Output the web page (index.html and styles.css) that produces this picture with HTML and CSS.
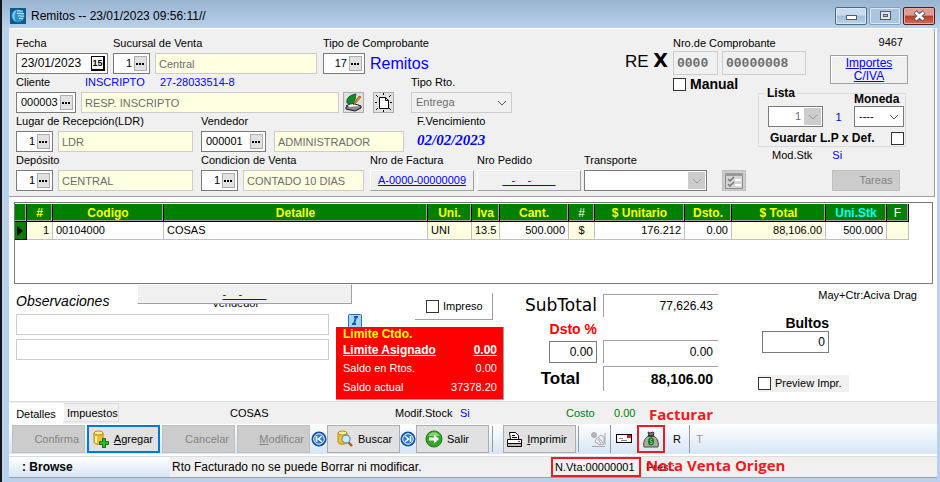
FILE: index.html
```html
<!DOCTYPE html>
<html lang="es">
<head>
<meta charset="utf-8">
<title>Remitos</title>
<link rel="stylesheet" href="styles.css">
</head>
<body>
<div class="window">
  <header class="titlebar">
    <svg class="app-icon" width="16" height="16" viewBox="0 0 16 16" aria-hidden="true"><rect width="16" height="16" fill="#0d5b8c"/><circle cx="8" cy="8" r="6.5" fill="#2f8fca"/><path d="M4 3c-3 4-2 8 2 11C4 10 4 6 7 2z" fill="#7cc6ee"/><path d="M7 3c3-1 3 1 6 0M7 5.500c3-1 3 1 7 0M8 8c2-1 3 1 6 0M9 10.500c2-1 2 1 4 0" stroke="#e4f4fd" fill="none"/></svg>
    <h1>Remitos -- 23/01/2023 09:56:11//</h1>
    <button class="win-btn" aria-label="Minimizar"><svg width="28" height="16" viewBox="0 0 28 16"><rect x="9.500" y="7.500" width="10" height="4" fill="#fff" stroke="#545b66"/></svg></button>
    <button class="win-btn dim" aria-label="Restaurar"><svg width="28" height="16" viewBox="0 0 28 16"><rect x="9.500" y="3.500" width="10" height="8" fill="#dde6ef" stroke="#545b66"/><rect x="12.500" y="6.500" width="4" height="2" fill="#a9c1da" stroke="#545b66"/></svg></button>
    <button class="win-btn close" aria-label="Cerrar"><svg width="28" height="16" viewBox="0 0 28 16"><path d="M10 4l9 8M19 4l-9 8" stroke="#545b66" stroke-width="4.500"/><path d="M10.500 4.500l8 7M18.500 4.500l-8 7" stroke="#fff" stroke-width="2.500"/></svg></button>
  </header>

  <main>
    <section class="head">
      <div class="head-top">
        <div class="rows">
          <div class="row">
            <div class="group w-fecha">
              <label for="fecha">Fecha</label>
              <div class="lookup date"><input id="fecha" value="23/01/2023"><button class="cal" aria-label="Calendario">15</button></div>
            </div>
            <div class="group w-suc">
              <label for="suc">Sucursal de Venta</label>
              <div class="pair"><div class="lookup short"><input id="suc" value="1"><button aria-label="Buscar sucursal"><i></i></button></div><input class="ro grow" aria-label="Sucursal" value="Central" readonly></div>
            </div>
            <div class="group">
              <label for="tipo">Tipo de Comprobante</label>
              <div class="pair"><div class="lookup mid"><input id="tipo" value="17"><button aria-label="Buscar tipo"><i></i></button></div><span class="kind">Remitos</span></div>
            </div>
          </div>
          <div class="row">
            <div class="group w-cli">
              <div class="labels"><label for="cli">Cliente</label><span class="blue">INSCRIPTO</span><span class="blue">27-28033514-8</span></div>
              <div class="pair"><div class="lookup code"><input id="cli" value="000003"><button aria-label="Buscar cliente"><i></i></button></div><input class="ro grow" aria-label="Nombre del cliente" value="RESP. INSCRIPTO" readonly></div>
            </div>
            <div class="group w-icons end">
              <div class="icons">
                <button class="sq" aria-label="Ver cliente"><svg width="19" height="19" viewBox="0 0 19 19"><path d="M2 13l6-3 9 3-6 4z" fill="#fff" stroke="#111"/><path d="M2 14v2l9 2 6-3v-2" fill="#8a8a8a" stroke="#111"/><path d="M3 10C2 5 6 2 12 1c-1 3 0 7-4 10z" fill="#138a2a" stroke="#063"/><path d="M17 4l-6 7-2 1 1-2 5-7z" fill="#e98b22" stroke="#7a3b00" stroke-width=".6"/></svg></button>
                <button class="sq" aria-label="Nuevo cliente"><svg width="19" height="19" viewBox="0 0 19 19" fill="none" stroke="#000"><path d="M5.500 4.500h6l3 3v8h-9z" fill="#fff"/><path d="M11.500 4.500v3h3M1 9.500h2M16 9.500h2M2 2l2 2M17 2l-2 2M2 17l2-2M17 17l-2-2M9.500 0v2M9.500 17v2"/></svg></button>
              </div>
            </div>
            <div class="group">
              <label for="rto">Tipo Rto.</label>
              <select id="rto" class="flat w-rto" disabled><option>Entrega</option></select>
            </div>
          </div>
          <div class="row">
            <div class="group w-lugar">
              <label for="ldr">Lugar de Recepción(LDR)</label>
              <div class="pair"><div class="lookup short"><input id="ldr" value="1"><button aria-label="Buscar lugar"><i></i></button></div><input class="ro w-name" aria-label="Lugar" value="LDR" readonly></div>
            </div>
            <div class="group w-vend">
              <label for="vend">Vendedor</label>
              <div class="pair wide"><div class="lookup vend"><input id="vend" value="000001"><button aria-label="Buscar vendedor"><i></i></button></div><input class="ro w-adm" aria-label="Nombre del vendedor" value="ADMINISTRADOR" readonly></div>
            </div>
            <div class="group">
              <span class="cap">F.Vencimiento</span>
              <span class="due">02/02/2023</span>
            </div>
          </div>
        </div>

        <div class="right">
          <div class="right-top">
            <span class="letter">RE <b>X</b></span>
            <div class="nro">
              <label for="n1">Nro.de Comprobante</label>
              <div class="nro-row"><input id="n1" class="gray n4" value="0000" disabled><input class="gray n8" aria-label="Número" value="00000008" disabled></div>
              <label class="check big"><input type="checkbox">Manual</label>
            </div>
            <div class="amounts">
              <span>9467</span>
              <button class="sunken">Importes<br>C/IVA</button>
            </div>
          </div>
          <fieldset class="lista">
            <legend>Lista</legend>
            <div class="lista-row">
              <select class="edge off w-lista" aria-label="Lista" disabled><option>1</option></select>
              <span class="one">1</span>
              <div class="moneda"><label for="mon">Moneda</label><select id="mon" class="edge"><option>----</option></select></div>
            </div>
            <label class="check guardar">Guardar L.P x Def.<input type="checkbox"></label>
          </fieldset>
        </div>
      </div>

      <div class="row">
        <div class="group w-lugar">
          <label for="dep">Depósito</label>
          <div class="pair"><div class="lookup short"><input id="dep" value="1"><button aria-label="Buscar depósito"><i></i></button></div><input class="ro w-name" aria-label="Depósito nombre" value="CENTRAL" readonly></div>
        </div>
        <div class="group w-cond">
          <label for="cond">Condicion de Venta</label>
          <div class="pair"><div class="lookup short"><input id="cond" value="1"><button aria-label="Buscar condición"><i></i></button></div><input class="ro w-cdias" aria-label="Condición" value="CONTADO 10 DIAS" readonly></div>
        </div>
        <div class="group w-fac"><span class="cap">Nro de Factura</span><button class="raised">A-0000-00000009</button></div>
        <div class="group w-fac"><span class="cap">Nro Pedido</span><button class="raised">   -    -        </button></div>
        <div class="group w-trans"><label for="tr">Transporte</label><select id="tr" class="edge off"><option></option></select></div>
        <div class="group end">
          <button class="sq gray-sq" aria-label="Lista de tareas"><svg width="22" height="19" viewBox="0 0 22 19"><rect x="2.500" y="2.500" width="17" height="15" fill="#d4d4d4" stroke="#8e8e8e"/><rect x="2" y="2" width="18" height="3" fill="#9a9a9a"/><path d="M5 8l2 2 4-4M5 13l2 2 4-4" stroke="#777" stroke-width="1.500" fill="none"/><path d="M12 9h6M12 14h6" stroke="#fff" stroke-width="2"/></svg></button>
        </div>
        <div class="tasks">
          <div class="mod"><span>Mod.Stk</span><span class="blue">Si</span></div>
          <button class="btn-tareas" disabled>Tareas</button>
        </div>
      </div>
    </section>

    <section class="grid-wrap">
      <table>
        <colgroup><col class="c-ind"><col class="c-num"><col class="c-cod"><col class="c-det"><col class="c-uni"><col class="c-iva"><col class="c-cant"><col class="c-num"><col class="c-unit"><col class="c-dsto"><col class="c-total"><col class="c-stk"><col class="c-f"></colgroup>
        <thead><tr><th></th><th>#</th><th>Codigo</th><th>Detalle</th><th>Uni.</th><th>Iva</th><th>Cant.</th><th class="white">#</th><th>$ Unitario</th><th>Dsto.</th><th>$ Total</th><th class="cyan">Uni.Stk</th><th class="white">F</th></tr></thead>
        <tbody><tr><td class="mark"><svg width="6" height="10" viewBox="0 0 6 10"><path d="M0 0l6 5-6 5z"/></svg></td><td class="y r">1</td><td>00104000</td><td>COSAS</td><td class="y">UNI</td><td class="y r">13.5</td><td class="r">500.000</td><td class="y c">$</td><td class="r">176.212</td><td class="r">0.00</td><td class="y r">88,106.00</td><td class="r">500.000</td><td class="y"></td></tr></tbody>
      </table>
    </section>

    <section class="detail">
      <div class="obs">
        <div class="obs-head"><label for="obs1">Observaciones</label><span>Vendedor</span><button class="raised over">-    -        </button></div>
        <input id="obs1"><input aria-label="Observaciones, segunda línea">
      </div>
      <div class="limits">
        <label class="check impreso"><input type="checkbox">Impreso</label>
        <svg class="info" width="14" height="13" viewBox="0 0 14 13"><rect x=".5" y=".5" width="13" height="13" rx="1" fill="#a9d3f7" stroke="#1e6fc0"/><path d="M6 3h4M4 10h4M8 3L6 10" stroke="#1458b0" stroke-width="1.800" fill="none"/></svg>
        <dl class="credit">
          <dt class="yellow">Limite Ctdo.</dt><dd></dd>
          <dt class="strong">Limite Asignado</dt><dd class="strong">0.00</dd>
          <dt>Saldo en Rtos.</dt><dd>0.00</dd>
          <dt>Saldo actual</dt><dd>37378.20</dd>
        </dl>
      </div>
      <div class="totals">
        <span class="t-sub">SubTotal</span><output class="val">77,626.43</output>
        <div class="disc"><label for="dsto">Dsto %</label><input id="dsto" class="num" value="0.00"></div><output class="val low">0.00</output>
        <span class="t-tot">Total</span><output class="val bold">88,106.00</output>
      </div>
      <div class="extra">
        <span class="hint">May+Ctr:Aciva Drag</span>
        <div class="bultos"><label for="bul">Bultos</label><input id="bul" class="num" value="0"></div>
        <label class="check preview"><input type="checkbox">Preview Impr.</label>
      </div>
    </section>

    <nav class="tabs">
      <button class="tab on">Detalles</button><button class="tab">Impuestos</button>
      <span class="s-item">COSAS</span><span class="s-mod">Modif.Stock</span><span class="s-si blue">Si</span><span class="s-costo">Costo</span><span class="s-zero">0.00</span><strong class="note">Facturar</strong>
    </nav>

    <div class="toolbar">
      <button class="tb" disabled>Confirma</button>
      <button class="tb focus"><svg width="18" height="18" viewBox="0 0 18 18"><path d="M2 3v9c0 3 9 3 9 0V3z" fill="#f2c12e" stroke="#b98712"/><ellipse cx="6.500" cy="3" rx="4.500" ry="2" fill="#fff0a0" stroke="#b98712"/><path d="M4 6v7" stroke="#fff3b4" stroke-width="2"/><path d="M10.500 8.500h3v3h3v3h-3v3h-3v-3h-3v-3h3z" fill="#35b52c" stroke="#11730c"/></svg><span><u>A</u>gregar</span></button>
      <button class="tb" disabled>Cancelar</button>
      <button class="tb" disabled><span><u>M</u>odificar</span></button>
      <button class="round" aria-label="Primero"><svg width="16" height="16" viewBox="0 0 16 16"><circle cx="8" cy="8" r="7.500" fill="#0e50a8"/><circle cx="8" cy="8" r="5.300" fill="#2b7ad6" stroke="#fff"/><path d="M5.500 5v6M11 5L7.500 8l3.500 3" stroke="#fff" stroke-width="1.600" fill="none"/></svg></button>
      <button class="tb live"><svg width="18" height="18" viewBox="0 0 18 18"><path d="M2 3v9c0 3 9 3 9 0V3z" fill="#f2c12e" stroke="#b98712"/><ellipse cx="6.500" cy="3" rx="4.500" ry="2" fill="#fff0a0" stroke="#b98712"/><path d="M12 12l4 4" stroke="#a4581c" stroke-width="2.400"/><circle cx="10" cy="9" r="4" fill="#cfe9fa" stroke="#6f93ad" stroke-width="1.300"/></svg>Buscar</button>
      <button class="round" aria-label="Último"><svg width="16" height="16" viewBox="0 0 16 16"><circle cx="8" cy="8" r="7.500" fill="#0e50a8"/><circle cx="8" cy="8" r="5.300" fill="#2b7ad6" stroke="#fff"/><path d="M10.500 5v6M5 5l3.500 3L5 11" stroke="#fff" stroke-width="1.600" fill="none"/></svg></button>
      <button class="tb live"><svg width="18" height="18" viewBox="0 0 18 18"><circle cx="9" cy="9" r="8" fill="#35a52b" stroke="#1c7a17"/><path d="M3 6c3-5 9-5 12 0" fill="#86d36f"/><path d="M4 7.500h5V4.500L14 9l-5 4.500v-3H4z" fill="#fff"/></svg>Salir</button>
      <span class="sep"></span>
      <button class="tb print"><svg width="17" height="17" viewBox="0 0 17 17" fill="#fff" stroke="#000"><path d="M4.500 8.500l-1-7h6l3 3v4z"/><path d="M6 4.500h3M6 6.500h5"/><path d="M1.500 8.500h14v4h-14z"/><path d="M1.500 12.500h14v3h-14z" fill="#bbb"/><path d="M12 10.500h2" stroke="#d22"/></svg><span><u>I</u>mprimir</span></button>
      <span class="sep"></span>
      <div class="tools">
        <button class="tool line" aria-label="Editar"><svg width="17" height="17" viewBox="0 0 17 17" fill="none" stroke="#a9a9a9"><circle cx="4" cy="4" r="2.500" fill="#b5b5b5"/><path d="M2 15.500h13M6 8l5-4 3 2v7l-4 1-5-3zM8 6l5 6M15 2v12M8 8l3 5"/></svg></button>
        <button class="tool mail" aria-label="Enviar"><svg width="17" height="10" viewBox="0 0 17 10"><rect x=".5" y=".5" width="15" height="8" fill="#fff" stroke="#000"/><path d="M3 4.500h4M5 6.500h6" stroke="#888"/><path d="M11 1h4v3h-4z" fill="#e01818"/></svg></button>
        <button class="tool marked" aria-label="Facturar"><svg width="16" height="17" viewBox="0 0 16 17"><path d="M5 5C1 8 0 12 1 16h14c1-4 0-8-4-11z" fill="#aaa99b" stroke="#4b4b45"/><path d="M5 1l2 1 3-1 1 1-1 3H6z" fill="#777" stroke="#333"/><path d="M5 5h6" stroke="#222"/><ellipse cx="8" cy="10.500" rx="3" ry="4" fill="#117a25"/><path d="M9 8.500H7.500v2h1.500v2H7" stroke="#8edb8a" fill="none" stroke-width=".8"/></svg></button>
        <button class="tool">R</button>
        <button class="tool left faded">T</button>
      </div>
    </div>

    <footer class="status">
      <b class="mode">: Browse</b>
      <span class="message">Rto Facturado no se puede Borrar ni modificar.</span>
      <span class="nvta">N.Vta:00000001</span>
      <span class="pres">Pres.:<strong class="note pinned">Nota Venta Origen</strong></span>
    </footer>
  </main>
</div>
</body>
</html>
```
FILE: styles.css
```css
* { box-sizing: border-box; }
body { margin: 0; font: 11px/15px "Liberation Sans", sans-serif; color: #000; background: #b9d1ea; }
button, input, select { font: inherit; color: inherit; margin: 0; }
button { padding: 0; }
input { min-width: 0; }
svg { flex: none; }

.window { min-height: 100vh; display: flex; flex-direction: column; border-left: 2px solid #15161c; padding: 0 3px 5px 7px; background: #b9d1ea; }
.titlebar { height: 28px; display: flex; align-items: center; gap: 2px; margin: 0 -3px 0 -7px; padding: 4px 5px 0 8px; background: linear-gradient(#99b4d1, #b9d1ea); }
.titlebar h1 { flex: 1; margin: 0 0 0 3px; font-size: 12px; font-weight: 400; }
.win-btn { width: 32px; height: 18px; display: flex; align-items: center; justify-content: center; border: 1px solid #4f6a88; border-radius: 2px; background: linear-gradient(#c9dbee 45%, #a2bdd9 50%, #bdd3ea); box-shadow: inset 0 0 0 1px #dbe8f5; }
.win-btn.dim { border-color: #829fbe; background: #abc5e0; }
.win-btn.close { border-color: #501a17; background: linear-gradient(#dd9d93 45%, #b83a25 50%, #d0705a); box-shadow: inset 0 0 0 1px #e6aca2; }
main { flex: 1; display: flex; flex-direction: column; background: #fff; }

/* Header form */
.head { padding: 7px 27px 6px 7px; background: #f0f0f0; border: 1px solid #fff; border-width: 1px 2px 2px 0; box-shadow: inset -1px -1px #a0a0a0; }
.head-top { display: flex; justify-content: space-between; }
.rows { display: flex; flex-direction: column; gap: 1px; margin-bottom: 1px; }
.row, .pair, .icons { display: flex; }
.group { display: flex; flex-direction: column; gap: 2px; min-height: 38px; }
.group.end { justify-content: flex-end; }
.pair { gap: 5px; }
.pair.wide { gap: 8px; }
.labels { display: grid; grid-template-columns: 69px 75px 1fr; }
.grow { flex: 1; }
.blue { color: #00f; }
.w-fecha { width: 97px; padding-right: 5px; }
.w-suc { width: 210px; padding-right: 6px; }
.w-cli { width: 327px; padding-right: 4px; }
.w-icons { width: 68px; }
.icons { gap: 9px; }
.w-lugar { width: 185px; }
.w-vend { width: 216px; }
.w-cond { width: 169px; }
.w-fac { width: 107px; padding-right: 3px; }
.w-trans { width: 138px; padding-right: 15px; }
.w-name { width: 135px; }
.w-adm { width: 130px; }
.w-cdias { width: 121px; }
.w-rto { width: 101px; }

.lookup { display: flex; height: 21px; border: 1px solid #7a7a7a; background: #fff; padding: 2px; }
.lookup input { flex: 1; width: 0; border: 0; padding: 0 2px; background: none; text-align: right; }
.lookup button { width: 13px; border: 1px solid #adadad; background: #e1e1e1; }
.lookup i { display: block; width: 9px; height: 2px; margin: auto; background: repeating-linear-gradient(90deg, #000 0 2px, transparent 2px 3px); }
.lookup.date input, .lookup.code input, .lookup.vend input { text-align: left; }
.lookup.date input { font-size: 12px; }
.lookup .cal { width: 14px; border: 1px solid #000; border-width: 1px 2px 2px 1px; font-size: 9px; font-weight: 700; line-height: 9px; background: #fff; }
.short { width: 37px; }
.mid { width: 42px; }
.code { width: 60px; }
.vend { width: 65px; }
.ro { height: 21px; border: 1px solid #ccc; background: #ffffe1; color: #6d6d6d; padding: 0 3px; }
.kind { color: #00f; font-size: 16px; line-height: 21px; }
.due { color: #00f; font: italic bold 15px/19px "Liberation Serif", serif; }
.sq { width: 21px; height: 21px; display: flex; align-items: center; justify-content: center; border: 1px solid #adadad; background: #e1e1e1; }
.gray-sq { width: 24px; background: #ccc; border-color: #bfbfbf; }
select { appearance: none; height: 21px; border-radius: 0; padding: 0 4px; background: #fff; }
select:disabled { opacity: 1; color: #6d6d6d; }
.flat, .edge { border: 1px solid #7a7a7a; background: #fff no-repeat right 4px center / 10px 6px url("data:image/svg+xml,%3Csvg xmlns='http://www.w3.org/2000/svg' viewBox='0 0 10 6'%3E%3Cpath d='M1 1l4 4 4-4' fill='none' stroke='%23555'/%3E%3C/svg%3E"); }
.flat { border-color: #ccc; background-color: #f0f0f0; }
.off { background-image: url("data:image/svg+xml,%3Csvg xmlns='http://www.w3.org/2000/svg' viewBox='0 0 17 17'%3E%3Cpath d='M0 0h17v17H0z' fill='%23ccc'/%3E%3Cpath d='M5 7l4 4 4-4' fill='none' stroke='%23999'/%3E%3C/svg%3E"); background-position: right 1px center; background-size: 17px 17px; }
.raised { height: 21px; border: 1px solid #a0a0a0; border-color: #fff #a0a0a0 #a0a0a0 #fff; background: #f0f0f0; color: #00f; text-decoration: underline; white-space: pre; }

.right { width: 283px; display: flex; flex-direction: column; align-items: flex-end; }
.right-top { display: flex; align-self: stretch; }
.letter { width: 48px; margin-top: 14px; font-size: 17px; line-height: 20px; white-space: nowrap; }
.letter b { font: bold 19px/20px "DejaVu Sans", sans-serif; }
.nro { width: 133px; display: flex; flex-direction: column; }
.nro-row { display: flex; gap: 4px; margin-bottom: 1px; }
.gray { height: 24px; padding: 0 3px; border: 1px solid #ccc; background: #f0f0f0; color: #6d6d6d; font: bold 13px "Liberation Mono", monospace; }
.n4 { width: 45px; }
.n8 { width: 84px; }
.check { display: flex; align-items: center; gap: 4px; }
.check input { appearance: none; width: 13px; height: 13px; flex: none; border: 1px solid #333; background: #fff; }
.big { font: bold 14px/17px "Liberation Sans", sans-serif; }
.amounts { width: 78px; margin-left: auto; display: flex; flex-direction: column; align-items: flex-end; gap: 5px; }
.amounts span { padding-right: 5px; margin-top: -1px; }
.sunken { width: 78px; height: 29px; border: 1px solid #a0a0a0; box-shadow: inset 1px 1px #fff; background: #f0f0f0; color: #00f; font-size: 12px; line-height: 13px; text-decoration: underline; }
.lista { position: relative; width: 148px; margin: 0 2px 0 0; padding: 0 1px 1px 9px; border: 1px solid #dcdcdc; font: bold 12px/14px "Liberation Sans", sans-serif; }
.lista legend { position: absolute; top: -8px; left: 6px; padding: 0 2px; background: #f0f0f0; }
.lista-row { display: flex; align-items: flex-end; justify-content: space-between; }
.lista select { font: 11px/15px "Liberation Sans", sans-serif; }
.w-lista { width: 55px; padding-left: 26px; }
.one { color: #00f; font: 11px/19px "Liberation Sans", sans-serif; }
.moneda { width: 50px; display: flex; flex-direction: column; }
.moneda label { margin-top: -2px; }
.guardar { justify-content: space-between; padding-left: 2px; margin-top: 4px; }
.tasks { flex: 1; display: flex; flex-direction: column; align-items: flex-end; justify-content: space-between; margin-top: -5px; }
.mod { display: flex; gap: 20px; width: 136px; }
.btn-tareas { width: 68px; height: 21px; margin-right: 8px; padding-left: 20px; border: 1px solid #bfbfbf; background: #ccc; color: #838383; }

/* Item grid */
.grid-wrap { margin: 3px 4px 0 5px; height: 82px; padding: 1px 0; border: 1px solid #7a7a7a; background: #fff; overflow: hidden; }
table { width: 894px; table-layout: fixed; border-collapse: separate; border-spacing: 0; }
.c-ind { width: 12px; } .c-num { width: 26px; } .c-cod { width: 111px; } .c-det { width: 264px; } .c-uni { width: 44px; } .c-iva { width: 28px; } .c-cant { width: 69px; } .c-unit { width: 90px; } .c-dsto { width: 47px; } .c-total { width: 94px; } .c-stk { width: 61px; } .c-f { width: 22px; }
th { height: 18px; padding: 0; background: #008000; color: #ff0; font: bold 12px/16px "Liberation Sans", sans-serif; border-right: 1px solid #000; border-bottom: 1px solid #000; box-shadow: inset -1px -1px #a0a0a0; }
th.white { color: #fff; font-weight: 400; }
th.cyan { color: #0ff; }
td { height: 18px; padding: 0 3px; border-right: 1px solid #c0c0c0; border-bottom: 1px solid #c0c0c0; white-space: nowrap; }
td.y { background: #ffffe1; }
td.r { text-align: right; }
td.c { text-align: center; }
td.mark { padding: 0 2px; background: #008000; border-color: #000; }
td.mark svg { display: block; }

/* Observations and totals */
.detail { display: flex; padding: 1px 20px 0 7px; min-height: 118px; border-bottom: 1px solid #dcdcdc; }
.obs { width: 313px; display: flex; flex-direction: column; gap: 4px; }
.obs input { height: 21px; border: 1px solid #ccc; background: #fff; }
.obs-head { position: relative; height: 25px; display: flex; align-items: flex-end; }
.obs-head label { width: 196px; font: italic 14px/18px "Liberation Sans", sans-serif; }
.obs-head span { line-height: 13px; }
.over { position: absolute; left: 121px; top: -1px; width: 215px; height: 20px; background: #f0f0f0; }
.limits { display: flex; flex-direction: column; width: 168px; margin-left: 7px; padding-top: 8px; }
.impreso { align-self: flex-end; width: 78px; height: 27px; margin-right: 11px; padding-left: 11px; border: 1px solid #a0a0a0; border-width: 0 1px 1px 0; }
.limits .info { margin: -6px 0 0 12px; }
.credit { margin: 0; height: 73px; display: grid; grid-template-columns: 1fr auto; grid-template-rows: 13px 19px 19px 19px; align-items: center; padding: 0 6px 2px 7px; background: #f00; color: #fff; border: 1px solid #a0a0a0; border-width: 0 1px 1px 0; }
.credit dd { margin: 0; text-align: right; }
.credit .yellow, .credit .strong { font: bold 12px/14px "Liberation Sans", sans-serif; }
.yellow { color: #ff0; }
.strong { text-decoration: underline; }
.totals { margin-left: 20px; padding-top: 9px; display: grid; grid-template-columns: 73px 115px; grid-template-rows: 24px 43px 26px; gap: 2px 6px; align-content: start; justify-items: end; }
.t-sub { font: 17px/22px "DejaVu Sans", sans-serif; }
.t-tot { font: bold 17px/24px "Liberation Sans", sans-serif; padding-right: 17px; align-self: end; }
.val { width: 115px; height: 23px; padding: 0 5px; border: 1px solid #a0a0a0; border-width: 1px 0 0 1px; text-align: right; font-size: 12px; line-height: 22px; }
.val.low { align-self: end; }
.val.bold { height: 25px; font: bold 14px/25px "Liberation Sans", sans-serif; align-self: end; }
.disc { width: 50px; display: flex; flex-direction: column; align-items: flex-end; justify-content: flex-end; gap: 3px; font: bold 14px/17px "Liberation Sans", sans-serif; color: #f00; white-space: nowrap; }
.num { height: 22px; border: 1px solid #7a7a7a; padding: 0 3px; text-align: right; font: 12px/15px "Liberation Sans", sans-serif; color: #000; background: #fff; }
.disc .num { width: 48px; }
.extra { margin-left: 40px; flex: 1; display: flex; flex-direction: column; align-items: flex-start; padding-top: 3px; }
.hint { align-self: flex-end; }
.bultos { width: 67px; margin: 12px 0 22px 4px; display: flex; flex-direction: column; text-align: right; font: bold 14px/16px "Liberation Sans", sans-serif; }
.preview { padding: 1px 7px 1px 0; background: #f0f0f0; }

/* Tabs, toolbar, status bar */
.tabs { height: 22px; display: flex; align-items: center; background: #f0f0f0; padding-top: 1px; }
.tab { height: 19px; align-self: flex-start; padding: 2px 3px 0; border: 1px solid #dcdcdc; border-left-color: #fff; background: #f0f0f0; }
.tab.on { height: 21px; width: 54px; border: 0; background: #fff; }
.tab + .tab { width: 56px; }
.s-item { width: 165px; margin-left: 111px; }
.s-mod { width: 65px; }
.s-si { width: 106px; }
.s-costo, .s-zero { color: #008000; width: 48px; }
.s-zero { width: 35px; }
.note { color: #ed1c24; font: bold 15px/20px "Open Sans", sans-serif; white-space: nowrap; }
.toolbar { height: 30px; display: flex; align-items: center; gap: 2px; padding: 0 3px; background: linear-gradient(#fff, #d6e5f5); }
.tb { width: 73px; height: 28px; display: flex; align-items: center; justify-content: flex-end; gap: 4px; padding: 0 5px; border: 1px solid #adadad; background: #e1e1e1; flex: none; }
.tb:disabled { background: #ccc; border-color: #bfbfbf; color: #838383; }
.tb.focus { border: 2px solid #0078d7; }
.tb.live { justify-content: flex-start; padding-left: 8px; margin: 0 -1px; }
.tb.print { padding: 0 8px 0 0; }
.round { width: 16px; height: 28px; padding: 0; border: 0; background: none; display: flex; align-items: center; margin: 0 -1px; }
.sep { width: 1px; height: 26px; background: #999; }
.sep:nth-of-type(1) { margin: 0 8px 0 2px; }
.tools { display: flex; align-items: center; margin-left: 6px; }
.tool { width: 24px; height: 28px; display: flex; align-items: center; justify-content: center; border: 0; background: none; }
.tool.line { border-right: 1px solid #999; }
.tool.mail { width: 26px; }
.tool.marked { width: 28px; border: 2px solid #ed1c24; }
.tool.left { width: 14px; justify-content: flex-end; border-left: 1px solid #999; }
.tool.faded { color: #999; }
.status { display: flex; align-items: center; height: 22px; margin-top: 2px; background: #f0f0f0; border-bottom: 1px solid #a0a0a0; border-top: 1px solid #dcdcdc; }
.mode { width: 161px; padding-left: 13px; font-size: 12px; line-height: 20px; background: linear-gradient(#fff, #d6e5f5); }
.message { width: 381px; padding-left: 2px; font-size: 12px; line-height: 20px; }
.nvta { width: 90px; height: 20px; padding: 0 2px; line-height: 16px; border: 2px solid #ed1c24; white-space: nowrap; }
.pres { position: relative; margin-left: 5px; }
.pinned { position: absolute; left: 0; top: -5px; }
```
